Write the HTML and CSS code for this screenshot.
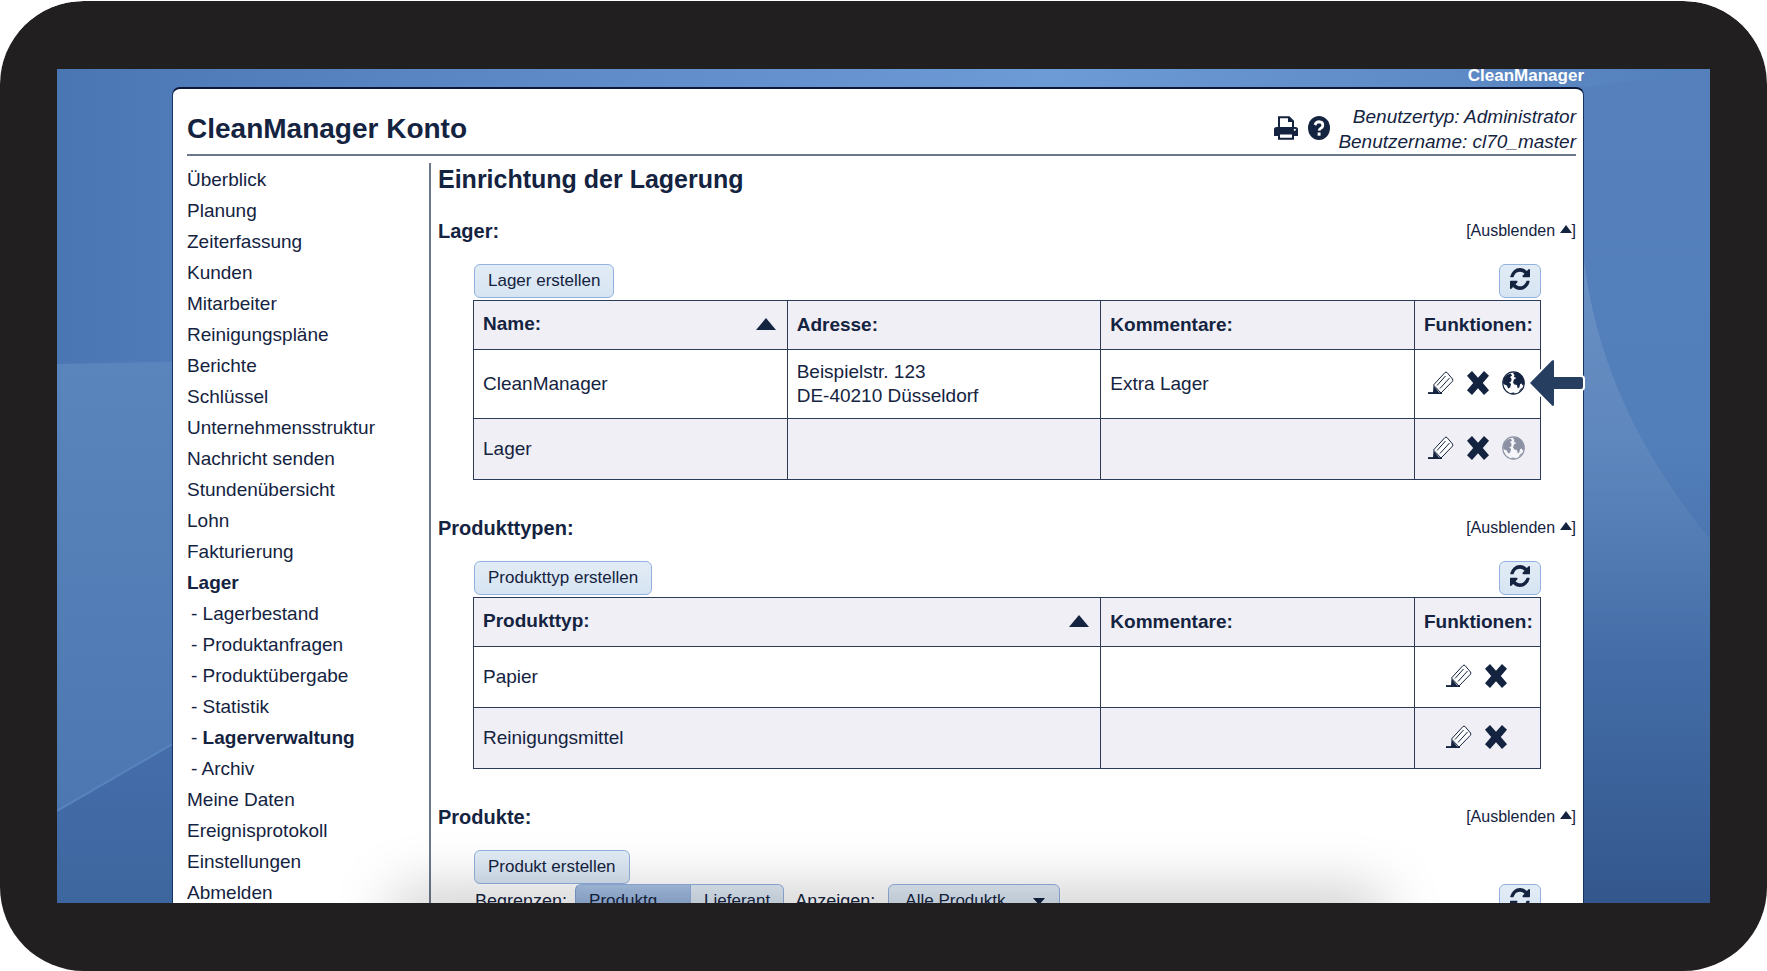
FILE: index.html
```html
<!DOCTYPE html>
<html lang="de">
<head>
<meta charset="utf-8">
<meta name="viewport" content="width=device-width, initial-scale=1">
<title>CleanManager Konto</title>
<link rel="stylesheet" href="styles.css">
</head>
<body>
<svg class="symbols" aria-hidden="true">
  <symbol id="refresh" viewBox="0 0 1536 1536" preserveAspectRatio="none"><path d="M1511 928q0 5-1 7-64 268-268 434.500t-478 166.500q-146 0-282.500-55t-243.500-157l-129 129q-19 19-45 19t-45-19-19-45v-448q0-26 19-45t45-19h448q26 0 45 19t19 45-19 45l-137 137q71 66 161 102t187 36q134 0 250-65t186-179q11-17 53-117 8-23 30-23h192q13 0 22.500 9.500t9.500 22.500zm25-800v448q0 26-19 45t-45 19h-448q-26 0-45-19t-19-45 19-45l138-138q-148-137-349-137-134 0-250 65t-186 179q-11 17-53 117-8 23-30 23h-199q-13 0-22.500-9.500t-9.500-22.500v-7q65-268 270-434.500t480-166.500q146 0 284 55.500t245 156.500l130-129q19-19 45-19t45 19 19 45z"/></symbol>
  <symbol id="edit" viewBox="0 0 26 24"><path d="M5.500 14 17 1.500q1-.8 2 0l5.500 6.500q.7 1.200 0 2.200L13 22z" fill="#fff" stroke="currentColor"/><path d="m9 14.500 8.500-9.500M12 17.500 21.500 7" fill="none" stroke="currentColor"/><path d="M5.500 14.500 12 22.500H0v-1.300h5z"/><path d="M0 21.500h14V23H0z"/></symbol>
  <symbol id="delete" viewBox="0 0 22 24"><path d="M5 0l6 6.700L17 0l5 4.700-6.200 7.300 6.200 7.300-5 4.700-6-6.700L5 24l-5-4.700L6.200 12 0 4.700z"/></symbol>
  <symbol id="globe" viewBox="0 0 24 24" preserveAspectRatio="none"><circle cx="12" cy="12" r="11.200" fill="#fff" stroke="currentColor" stroke-width="1.200"/><path d="M.8 12 2 7.500 5 4l4-1.500 1.500 2L8.500 6 10 8l-.5 2.500-2 1L9.500 13l-1 3.500-2 1L5 14.500l-2.500-1z"/><path d="M11 1.500 16 1.200l4.500 3L23 9l.3 4-1.800 1.500-1-2-1.500.5-1 3.500-1.500 1-1-3.500-2.500-.5-1.500-2 1-3 2.500-1.500-2.500-1L13 4z"/><path d="M18.500 19 21 16.500l-1 2.500-2.500 2zM9 22 12 21.500l2 .7-3 .8z"/></symbol>
  <symbol id="up" viewBox="0 0 20 12" preserveAspectRatio="none"><path d="M10 0 20 12H0z"/></symbol>
</svg>

<div class="device">
<div class="screen">
  <svg class="wallpaper" viewBox="0 0 1653 834" preserveAspectRatio="none" aria-hidden="true">
    <defs>
      <linearGradient id="sky" x1="0" y1="0" x2="0" y2="1">
        <stop offset="0" stop-color="#5580bb"/><stop offset=".45" stop-color="#527eb9"/><stop offset=".72" stop-color="#436ca6"/><stop offset="1" stop-color="#33578d"/>
      </linearGradient>
      <linearGradient id="shine" x1="0" y1="0" x2="1" y2="0">
        <stop offset="0" stop-color="#4b76b4"/><stop offset=".2" stop-color="#5984c2"/><stop offset=".6" stop-color="#6d9bd6"/><stop offset=".93" stop-color="#5884c0"/><stop offset="1" stop-color="#5280ba"/>
      </linearGradient>
      <linearGradient id="left" x1="0" y1="0" x2="0" y2="1">
        <stop offset="0" stop-color="#5984bc"/><stop offset="1" stop-color="#4d77b0"/>
      </linearGradient>
      <linearGradient id="corner" x1="0" y1="0" x2="0" y2="1">
        <stop offset="0" stop-color="#466fae"/><stop offset="1" stop-color="#3e669e"/>
      </linearGradient>
      <linearGradient id="swoosh" x1="0" y1="0" x2="0" y2="1">
        <stop offset="0" stop-color="#fff" stop-opacity=".14"/><stop offset="1" stop-color="#fff" stop-opacity="0"/>
      </linearGradient>
    </defs>
    <path fill="url(#sky)" d="M0 0h1653v834H0z"/>
    <path fill="url(#shine)" d="M0 0h1653L1530 18H200v277H0z"/>
    <path fill="url(#left)" d="M0 295 200 291v450H0z"/>
    <path fill="url(#corner)" d="M0 742 200 626v208H0z"/>
    <path stroke="#5884be" stroke-width="2" d="M0 742 200 626"/>
    <path fill="url(#swoosh)" d="M1500 160 1527 191Q1545 340 1653 470V600H1500z"/>
  </svg>

  <div class="brand">CleanManager</div>

  <div class="panel">
    <header class="header">
      <h1 class="title">CleanManager Konto</h1>
      <div class="tools">
        <button class="icon-button" type="button" aria-label="Drucken">
          <svg width="24" height="24" viewBox="0 0 24 24"><path d="M5 11.500V1.200h10l4 4v6.300" fill="#fff" stroke="currentColor" stroke-width="2"/><path d="M14 1v5h5z"/><path fill-rule="evenodd" d="M2.500 11h19q2.500 0 2.500 2.500V20h-4.500v-3h-15v3H0v-6.500Q0 11 2.500 11zm18.300 1.800a1 1 0 1 0 .01 0z"/><path d="M5 17.500h14v5.300H5z" fill="#fff" stroke="currentColor" stroke-width="2"/></svg>
        </button>
        <button class="icon-button" type="button" aria-label="Hilfe">
          <svg width="22" height="24" viewBox="0 0 24 24" preserveAspectRatio="none"><circle cx="12" cy="12" r="12"/><path d="M7.500 9Q9 5.800 12 5.800q4.200.2 4.200 3.400 0 1.800-2.200 3-1.800 1-1.900 2.500" fill="none" stroke="#fff" stroke-width="3"/><path fill="#fff" d="M10.500 16.500h3.200v3.200h-3.200z"/></svg>
        </button>
      </div>
      <div class="user">Benutzertyp: Administrator<br>Benutzername: cl70_master</div>
    </header>

    <div class="body">
      <nav class="menu">
        <a href="#">Überblick</a>
        <a href="#">Planung</a>
        <a href="#">Zeiterfassung</a>
        <a href="#">Kunden</a>
        <a href="#">Mitarbeiter</a>
        <a href="#">Reinigungspläne</a>
        <a href="#">Berichte</a>
        <a href="#">Schlüssel</a>
        <a href="#">Unternehmensstruktur</a>
        <a href="#">Nachricht senden</a>
        <a href="#">Stundenübersicht</a>
        <a href="#">Lohn</a>
        <a href="#">Fakturierung</a>
        <a href="#" class="current">Lager</a>
        <a href="#" class="sub">- Lagerbestand</a>
        <a href="#" class="sub">- Produktanfragen</a>
        <a href="#" class="sub">- Produktübergabe</a>
        <a href="#" class="sub">- Statistik</a>
        <a href="#" class="sub">- <b>Lagerverwaltung</b></a>
        <a href="#" class="sub">- Archiv</a>
        <a href="#">Meine Daten</a>
        <a href="#">Ereignisprotokoll</a>
        <a href="#">Einstellungen</a>
        <a href="#">Abmelden</a>
      </nav>

      <main class="main">
        <h2 class="page-title">Einrichtung der Lagerung</h2>

        <section class="section">
          <div class="section-head"><h3>Lager:</h3><a href="#" class="toggle">[Ausblenden <svg class="toggle-mark"><use href="#up"/></svg>]</a></div>
          <div class="section-body">
            <div class="toolbar">
              <button class="button" type="button">Lager erstellen</button>
              <button class="button refresh" type="button" aria-label="Aktualisieren"><svg><use href="#refresh"/></svg></button>
            </div>
            <table class="grid">
              <colgroup><col><col><col><col class="col-actions"></colgroup>
              <thead><tr>
                <th><button class="sort" type="button">Name: <svg><use href="#up"/></svg></button></th>
                <th>Adresse:</th><th>Kommentare:</th><th>Funktionen:</th>
              </tr></thead>
              <tbody>
                <tr class="tall">
                  <td>CleanManager</td><td>Beispielstr. 123<br>DE-40210 Düsseldorf</td><td>Extra Lager</td>
                  <td><div class="actions">
                    <button class="icon-button" type="button" aria-label="Bearbeiten"><svg class="i-edit"><use href="#edit"/></svg></button>
                    <button class="icon-button" type="button" aria-label="Löschen"><svg class="i-delete"><use href="#delete"/></svg></button>
                    <button class="icon-button" type="button" aria-label="Karte"><svg class="i-globe"><use href="#globe"/></svg></button>
                    <svg class="pointer" viewBox="0 0 58 52" aria-hidden="true"><path d="M3 26 25 3.500q2-1.500 2 1.500V20h27q2 0 2 2v8q0 2-2 2H27v15q0 3-2 1.500z" stroke="#fff" stroke-width="4" paint-order="stroke" stroke-linejoin="round"/></svg>
                  </div></td>
                </tr>
                <tr class="shaded">
                  <td>Lager</td><td></td><td></td>
                  <td><div class="actions">
                    <button class="icon-button" type="button" aria-label="Bearbeiten"><svg class="i-edit"><use href="#edit"/></svg></button>
                    <button class="icon-button" type="button" aria-label="Löschen"><svg class="i-delete"><use href="#delete"/></svg></button>
                    <button class="icon-button" type="button" aria-label="Karte" disabled><svg class="i-globe"><use href="#globe"/></svg></button>
                  </div></td>
                </tr>
              </tbody>
            </table>
          </div>
        </section>

        <section class="section">
          <div class="section-head"><h3>Produkttypen:</h3><a href="#" class="toggle">[Ausblenden <svg class="toggle-mark"><use href="#up"/></svg>]</a></div>
          <div class="section-body">
            <div class="toolbar">
              <button class="button" type="button">Produkttyp erstellen</button>
              <button class="button refresh" type="button" aria-label="Aktualisieren"><svg><use href="#refresh"/></svg></button>
            </div>
            <table class="grid">
              <colgroup><col><col><col><col class="col-actions"></colgroup>
              <thead><tr>
                <th colspan="2"><button class="sort" type="button">Produkttyp: <svg><use href="#up"/></svg></button></th>
                <th>Kommentare:</th><th>Funktionen:</th>
              </tr></thead>
              <tbody>
                <tr>
                  <td colspan="2">Papier</td><td></td>
                  <td><div class="actions">
                    <button class="icon-button" type="button" aria-label="Bearbeiten"><svg class="i-edit"><use href="#edit"/></svg></button>
                    <button class="icon-button" type="button" aria-label="Löschen"><svg class="i-delete"><use href="#delete"/></svg></button>
                  </div></td>
                </tr>
                <tr class="shaded">
                  <td colspan="2">Reinigungsmittel</td><td></td>
                  <td><div class="actions">
                    <button class="icon-button" type="button" aria-label="Bearbeiten"><svg class="i-edit"><use href="#edit"/></svg></button>
                    <button class="icon-button" type="button" aria-label="Löschen"><svg class="i-delete"><use href="#delete"/></svg></button>
                  </div></td>
                </tr>
              </tbody>
            </table>
          </div>
        </section>

        <section class="section">
          <div class="section-head"><h3>Produkte:</h3><a href="#" class="toggle">[Ausblenden <svg class="toggle-mark"><use href="#up"/></svg>]</a></div>
          <div class="section-body">
            <div class="toolbar">
              <button class="button" type="button">Produkt erstellen</button>
            </div>
            <div class="filters">
              <span id="limit">Begrenzen:</span>
              <div class="segments" role="group" aria-labelledby="limit">
                <button class="button wide" type="button" aria-pressed="true">Produktg</button>
                <button class="button" type="button" aria-pressed="false">Lieferant</button>
              </div>
              <label for="show">Anzeigen:</label>
              <div class="picker">
                <select class="button" id="show"><option>Alle Produktk</option></select>
                <svg class="picker-mark" viewBox="0 0 12 7" aria-hidden="true"><path d="M0 0h12L6 7z"/></svg>
              </div>
              <button class="button refresh" type="button" aria-label="Aktualisieren"><svg><use href="#refresh"/></svg></button>
            </div>
          </div>
        </section>
      </main>
    </div>
  </div>
</div>
</div>
</body>
</html>
```
FILE: styles.css
```css
* { box-sizing: border-box; }

body {
  margin: 0;
  background: #fff;
  color: #14233f;
  font: 19px/24px "Liberation Sans", Arial, sans-serif;
}

h1, h2, h3 { margin: 0; }
a { color: inherit; text-decoration: none; }
svg { display: block; fill: currentColor; }
.symbols { position: absolute; width: 0; height: 0; }

button, select {
  margin: 0;
  padding: 0;
  border: 0;
  background: none;
  color: inherit;
  font: inherit;
}

.device {
  display: flex;
  height: 100vh;
  padding: 68px 57px;
  border-top: 1px solid #fff;
  border-radius: 84px;
  background: #221f20;
  background-clip: padding-box;
}

.screen {
  position: relative;
  flex: 1;
  overflow: hidden;
  background: #4f7bb7;
}

.screen::after {
  content: "";
  position: absolute;
  left: 350px;
  right: 340px;
  bottom: -24px;
  height: 20px;
  box-shadow: 0 0 60px 12px rgba(0, 0, 0, .26);
  pointer-events: none;
}

.wallpaper {
  position: absolute;
  width: 100%;
  height: 100%;
}

.brand {
  position: relative;
  height: 18px;
  margin-right: 126px;
  color: #fff;
  font-size: 17px;
  font-weight: bold;
  line-height: 14px;
  text-align: right;
}

.panel {
  position: relative;
  margin: 0 126px 0 115px;
  padding: 0 7px 0 14px;
  border: 1px solid #17335f;
  border-top: 2px solid #0b1838;
  border-radius: 8px 8px 0 0;
  background: #fff;
}

.header {
  display: flex;
  align-items: center;
  padding-top: 15px;
  border-bottom: 2px solid #6c778c;
}

.title { flex: 1; font-size: 28px; line-height: 32px; }
.tools { display: flex; gap: 10px; margin-right: 8px; padding-bottom: 2px; }
.user { font-style: italic; line-height: 25px; text-align: right; }
.icon-button { display: block; }
.icon-button:disabled { opacity: .45; }

.body {
  display: grid;
  grid-template-columns: 242px 1fr;
  margin-top: 7px;
}

.menu { display: flex; flex-direction: column; padding-top: 1px; line-height: 31px; }
.menu .current { font-weight: bold; }
.menu .sub { padding-left: 4px; }

.main { padding-left: 7px; border-left: 2px solid #6c778c; }
.page-title { margin-bottom: 24px; font-size: 25px; line-height: 32px; }

.section { margin-bottom: 36px; }
.section-head { display: flex; justify-content: space-between; }
.section-head h3 { font-size: 20px; }
.toggle { font-size: 16px; }
.toggle-mark { display: inline-block; width: 12px; height: 8px; vertical-align: 3px; }
.section-body { padding: 21px 35px 0 35px; }

.toolbar { display: flex; justify-content: space-between; padding-left: 1px; }

.button {
  height: 34px;
  padding: 0 13px;
  border: 1px solid #93b1df;
  border-radius: 6px;
  background: linear-gradient(#e2ecf6, #d6e4f2);
  font-size: 17px;
}

.refresh { width: 42px; padding: 0; }
.refresh svg { width: 20px; height: 22px; margin: -4px auto 0; }

.grid {
  width: 100%;
  margin-top: 2px;
  border-collapse: collapse;
  table-layout: fixed;
}

.col-actions { width: 126px; }
.grid th, .grid td { height: 61px; padding: 0 9px; border: 1px solid #2c3b58; text-align: left; }
.grid th { height: 49px; background: #f0eff6; }
.grid .tall td { height: 69px; }
.grid .shaded td { background: #f0eff6; }

.sort {
  display: flex;
  align-items: center;
  justify-content: space-between;
  width: 100%;
  padding: 0 2px 2px 0;
  font-weight: bold;
}

.sort svg { width: 20px; height: 12px; }

.actions { position: relative; display: flex; justify-content: center; gap: 13px; padding: 0 2px 3px 0; }
.i-edit { width: 26px; height: 24px; }
.i-delete { width: 22px; height: 24px; }
.i-globe { width: 23px; height: 24px; }

.pointer {
  position: absolute;
  top: -14px;
  right: -54px;
  width: 58px;
  height: 52px;
  color: #263f61;
}

.filters { display: flex; align-items: center; padding-left: 2px; font-size: 18px; }
.filters .refresh { margin-left: auto; }
.segments { display: flex; margin: 0 11px 0 8px; }
.segments .button { border-radius: 0 6px 6px 0; border-left: 0; }
.segments .wide {
  width: 116px;
  border-left: 1px solid #7f9fd2;
  border-radius: 6px 0 0 6px;
  background: linear-gradient(#a9c2e6, #8ba9d4);
  text-align: left;
}

.picker { position: relative; margin-left: 13px; }
.picker .button { width: 172px; padding: 0 16px; appearance: none; }
.picker-mark { position: absolute; top: 14px; right: 15px; width: 12px; height: 7px; pointer-events: none; }
```
